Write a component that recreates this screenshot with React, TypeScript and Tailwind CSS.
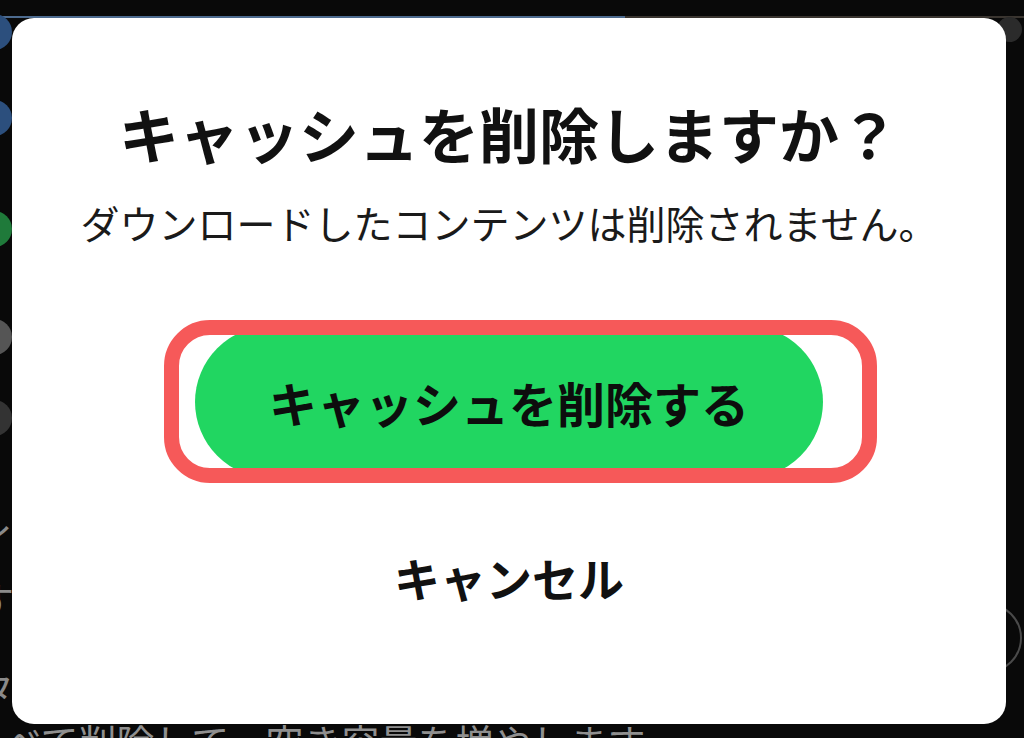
import React from 'react'

// ダイアログの背後のリスト（左端だけ見えている）
const peekRows = [
  { mt: 'mt-[-4px]', color: 'bg-[#2c4f7d]' },
  { mt: 'mt-[50px]', color: 'bg-[#2c4f7d]' },
  { mt: 'mt-[75px]', color: 'bg-[#1f7a3a]' },
  { mt: 'mt-[72px]', color: 'bg-[#555555]' },
  { mt: 'mt-[45px]', color: 'bg-[#333333]' },
]

function Backdrop() {
  return (
    <div className="flex h-full flex-col">
      <div className="mt-[16px] flex h-[2px] shrink-0">
        <div className="w-[625px] bg-[#4d6b8f]" />
        <div className="flex-1 bg-[#3a3530]" />
      </div>
      <div className="flex flex-1">
        <div className="-ml-[24px] flex w-[36px] flex-col">
          {peekRows.map((r, i) => (
            <div key={i} className={`h-[36px] w-[36px] shrink-0 rounded-full ${r.mt} ${r.color}`} />
          ))}
          <div className="mt-[84px] flex flex-col gap-[22px] text-[38px] leading-none text-[#8a8a8a]">
            <span>イ</span>
            <span>す</span>
            <span className="mt-[28px]">タ</span>
          </div>
        </div>
        <div className="flex-1" />
        <div className="mr-[2px] mt-[-1px] flex w-[70px] flex-col items-end">
          <div className="h-[25px] w-[25px] rounded-full bg-[#2b2b2b]" />
          <div className="mt-[561px] h-[70px] w-[70px] rounded-full border-2 border-[#4a4a4a]" />
        </div>
      </div>
      <div className="h-[16px] overflow-visible whitespace-nowrap pl-[4px] text-[38px] leading-none text-[#8f8f8f]">
        べて削除して、空き容量を増やします
      </div>
    </div>
  )
}

export default function App() {
  return (
    <div className="relative h-[738px] w-[1024px] overflow-hidden bg-[#090909] font-['Noto_Sans_CJK_JP',sans-serif] text-[#111111]">
      <Backdrop />

      {/* モーダル（背後の画面の上に重なる） */}
      <div className="absolute left-[12px] top-[18px] z-10 flex h-[706px] w-[994px] flex-col items-center rounded-[22px] bg-white">
        <h1 className="mt-[85px] whitespace-nowrap text-[60px] font-bold leading-[60px]">
          キャッシュを削除しますか？
        </h1>
        <p className="mt-[40px] whitespace-nowrap text-[39px] font-normal leading-[39px] text-[#1a1a1a]">
          ダウンロードしたコンテンツは削除されません。
        </p>

        {/* 強調の赤枠 */}
        <div className="ml-[152px] mt-[78px] flex h-[163px] w-[713px] items-center self-start overflow-hidden rounded-[46px] border-[15px] border-[#f65959]">
          <button className="ml-[16px] flex h-[152px] w-[628px] shrink-0 items-center justify-center rounded-full bg-[#21d661] text-[48px] font-bold leading-none text-[#0d0d0d]">
            キャッシュを削除する
          </button>
        </div>

        <button className="mt-[71px] whitespace-nowrap text-[46px] font-bold leading-[46px]">
          キャンセル
        </button>
      </div>
    </div>
  )
}
